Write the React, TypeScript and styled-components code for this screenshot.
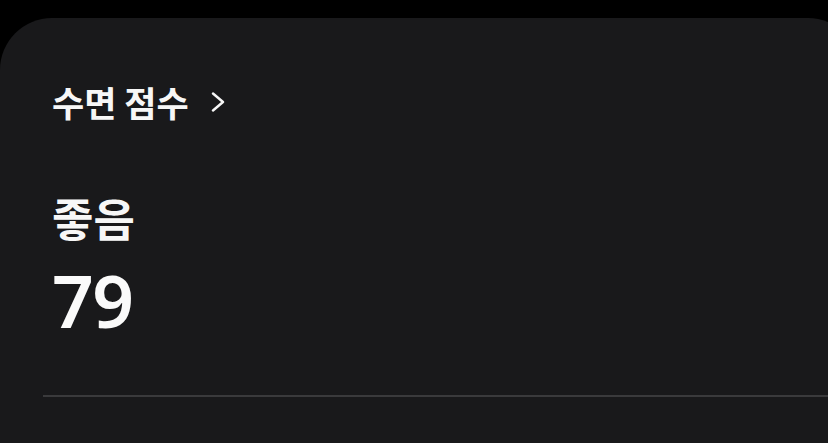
import { FC } from 'react';
import styled, { createGlobalStyle } from 'styled-components';

const GlobalStyle = createGlobalStyle`
  html, body {
    margin: 0;
    padding: 0;
    background: #000;
    overflow: hidden;
  }
  body {
    font-family: 'Noto Sans CJK KR', 'Noto Sans', sans-serif;
  }
`;

const Screen = styled.div`
  width: 828px;
  height: 443px;
  padding-top: 18px;
  box-sizing: border-box;
  overflow: hidden;
`;

const Card = styled.section`
  width: 860px;
  height: 520px;
  background: #19191b;
  border-radius: 52px;
  padding: 64px 0 0 52px;
  box-sizing: border-box;
`;

const TitleRow = styled.div`
  display: flex;
  align-items: center;
  gap: 22px;
  color: #f7f7f7;
  font-size: 35px;
  font-weight: 700;
  line-height: 40px;
`;

const Chevron = styled.svg`
  width: 14px;
  height: 20px;
`;

const Status = styled.div`
  margin-top: 70px;
  color: #f7f7f7;
  font-size: 45px;
  font-weight: 700;
  line-height: 52px;
`;

const Score = styled.div`
  margin-top: 16px;
  color: #fafafa;
  font-family: 'Noto Sans', 'Open Sans', sans-serif;
  font-size: 73px;
  font-weight: 600;
  line-height: 80px;
  letter-spacing: -1.5px;
`;

const Divider = styled.hr`
  margin: 55px 0 0 -9px;
  border: none;
  height: 2px;
  background: #3a3a3c;
`;

const App: FC = () => {
  return (
    <Screen>
      <GlobalStyle />
      <Card>
        <TitleRow>
          수면 점수
          <Chevron viewBox="0 0 14 20" fill="none">
            <path d="M2 1.5 L12 10 L2 18.5" stroke="#f7f7f7" strokeWidth="2.4" strokeLinecap="round" strokeLinejoin="round" />
          </Chevron>
        </TitleRow>
        <Status>좋음</Status>
        <Score>79</Score>
        <Divider />
      </Card>
    </Screen>
  );
};

export default App;
